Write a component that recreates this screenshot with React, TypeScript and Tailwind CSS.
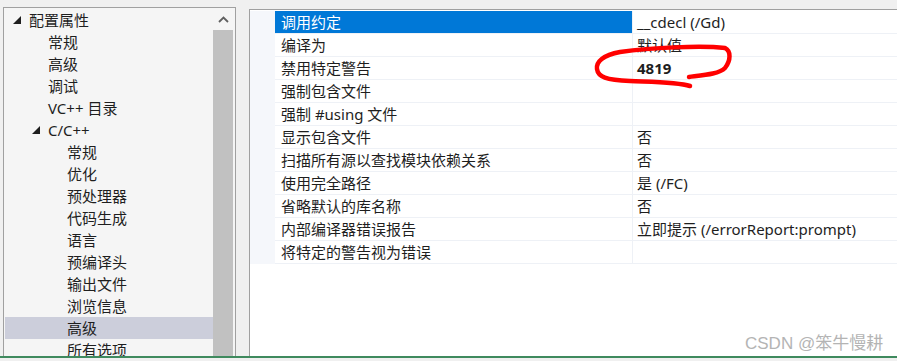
import React from "react";

type TreeItem = { label: string; level: number; expanded?: boolean; selected?: boolean };

const treeItems: TreeItem[] = [
  { label: "配置属性", level: 0, expanded: true },
  { label: "常规", level: 1 },
  { label: "高级", level: 1 },
  { label: "调试", level: 1 },
  { label: "VC++ 目录", level: 1 },
  { label: "C/C++", level: 1, expanded: true },
  { label: "常规", level: 2 },
  { label: "优化", level: 2 },
  { label: "预处理器", level: 2 },
  { label: "代码生成", level: 2 },
  { label: "语言", level: 2 },
  { label: "预编译头", level: 2 },
  { label: "输出文件", level: 2 },
  { label: "浏览信息", level: 2 },
  { label: "高级", level: 2, selected: true },
  { label: "所有选项", level: 2 },
];

type Prop = { name: string; value: string; bold?: boolean; selected?: boolean };

const props: Prop[] = [
  { name: "调用约定", value: "__cdecl (/Gd)", selected: true },
  { name: "编译为", value: "默认值" },
  { name: "禁用特定警告", value: "4819", bold: true },
  { name: "强制包含文件", value: "" },
  { name: "强制 #using 文件", value: "" },
  { name: "显示包含文件", value: "否" },
  { name: "扫描所有源以查找模块依赖关系", value: "否" },
  { name: "使用完全路径", value: "是 (/FC)" },
  { name: "省略默认的库名称", value: "否" },
  { name: "内部编译器错误报告", value: "立即提示 (/errorReport:prompt)" },
  { name: "将特定的警告视为错误", value: "" },
];

const indent = ["pl-[24px]", "pl-[43px]", "pl-[62px]"];

function Triangle() {
  return (
    <svg width="8" height="8" viewBox="0 0 8 8" className="mr-[8px] shrink-0">
      <polygon points="8,0 8,8 0,8" fill="#1e1e1e" />
    </svg>
  );
}

function TreeRow({ item }: { item: TreeItem }) {
  return (
    <div
      className={`h-[22px] flex items-center ml-[1px] ${
        item.selected ? "bg-[#cccedb]" : ""
      }`}
    >
      <div className={`flex items-center ${indent[item.level]}`}>
        {item.expanded ? (
          <div className="flex items-center -ml-[16px]">
            <Triangle />
            <span>{item.label}</span>
          </div>
        ) : (
          <span>{item.label}</span>
        )}
      </div>
    </div>
  );
}

export default function App() {
  return (
    <div
      className="w-[897px] h-[361px] bg-[#f0f0f0] flex flex-col overflow-hidden text-[15px] text-[#1e1e1e] relative"
      style={{ fontFamily: '"Noto Sans", "Noto Sans CJK SC", sans-serif' }}
    >
      <div className="flex flex-1 min-h-0 pt-[7px] pl-[3px]">
        {/* Tree panel */}
        <div className="w-[233px] border border-b-0 border-[#a0a0a0] bg-[#f5f5f5] flex pr-[2px] overflow-hidden">
          <div className="w-[209px] pt-[1px] leading-none">
            {treeItems.map((item, i) => (
              <TreeRow key={i} item={item} />
            ))}
          </div>
          <div className="w-[20px] flex flex-col">
            <div className="h-[22px] flex items-center justify-center">
              <svg width="11" height="7" viewBox="0 0 11 7">
                <polyline points="1,6 5.5,1.5 10,6" fill="none" stroke="#606060" strokeWidth="1.8" />
              </svg>
            </div>
            <div className="flex-1 bg-[#c1c1c1]" />
          </div>
        </div>

        {/* Property grid */}
        <div className="flex-1 ml-[13px] mt-[2px] border-l border-t border-[#a0a0a0] bg-white pt-[1px]">
          {props.map((p, i) => (
            <div key={i} className="flex h-[23px]">
              <div className="w-[25px] bg-[#f5f7fb]" />
              <div
                className={`w-[357px] flex items-center pl-[6px] border-b border-[#eef1f6] ${
                  p.selected ? "bg-[#0078d7] text-white" : ""
                }`}
              >
                {p.name}
              </div>
              <div
                className={`flex-1 flex items-center pl-[4px] border-l border-b border-[#eef1f6] ${
                  p.bold ? "font-bold" : ""
                }`}
              >
                {p.value}
              </div>
            </div>
          ))}
        </div>
      </div>
      <div className="h-[2px] bg-[#3f8a5e]" />
      <div className="h-[3px] bg-[#f0f0f0]" />

      {/* red hand-drawn mark */}
      <svg
        className="absolute left-0 top-0 pointer-events-none"
        width="897"
        height="361"
        viewBox="0 0 897 361"
      >
        <path
          d="M689 77 C705 75 719 74 725 68 C731 60 731 51 725 48 C700 45 650 48 620 52 C603 55 596 62 597 69 C598 77 606 80 630 81 C655 82 678 82 690 86"
          fill="none"
          stroke="#ff0000"
          strokeWidth="4.5"
          strokeLinecap="round"
          strokeLinejoin="round"
        />
      </svg>

      <div
        className="absolute left-[745px] top-[335px] text-[17px] text-[#b4b4b4] leading-none"
        style={{ fontFamily: '"Liberation Sans", "Noto Sans CJK SC", sans-serif' }}
      >
        CSDN @笨牛慢耕
      </div>
    </div>
  );
}
